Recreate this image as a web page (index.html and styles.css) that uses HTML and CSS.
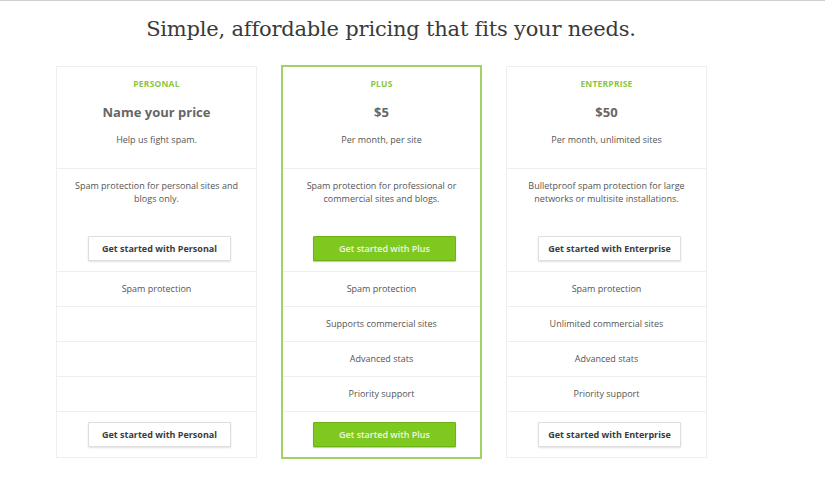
FILE: index.html
```html
<!DOCTYPE html>
<html lang="en">
<head>
<meta charset="utf-8">
<title>Pricing</title>
<link rel="stylesheet" href="styles.css">
</head>
<body>
<div class="topline"></div>
<h1 class="title">Simple, affordable pricing that fits your needs.</h1>
<div class="plans">
  <div class="card">
    <div class="head">
      <div class="label">PERSONAL</div>
      <div class="price">Name your price</div>
      <div class="sub">Help us fight spam.</div>
    </div>
    <div class="desc">
      <p>Spam protection for personal sites and blogs only.</p>
      <a class="btn">Get started with Personal</a>
    </div>
    <ul class="features">
      <li>Spam protection</li>
      <li></li>
      <li></li>
      <li></li>
    </ul>
    <div class="foot"><a class="btn">Get started with Personal</a></div>
  </div>
  <div class="card featured">
    <div class="head">
      <div class="label">PLUS</div>
      <div class="price">$5</div>
      <div class="sub">Per month, per site</div>
    </div>
    <div class="desc">
      <p>Spam protection for professional or commercial sites and blogs.</p>
      <a class="btn btn-green">Get started with Plus</a>
    </div>
    <ul class="features">
      <li>Spam protection</li>
      <li>Supports commercial sites</li>
      <li>Advanced stats</li>
      <li>Priority support</li>
    </ul>
    <div class="foot"><a class="btn btn-green">Get started with Plus</a></div>
  </div>
  <div class="card">
    <div class="head">
      <div class="label">ENTERPRISE</div>
      <div class="price">$50</div>
      <div class="sub">Per month, unlimited sites</div>
    </div>
    <div class="desc">
      <p>Bulletproof spam protection for large networks or multisite installations.</p>
      <a class="btn">Get started with Enterprise</a>
    </div>
    <ul class="features">
      <li>Spam protection</li>
      <li>Unlimited commercial sites</li>
      <li>Advanced stats</li>
      <li>Priority support</li>
    </ul>
    <div class="foot"><a class="btn">Get started with Enterprise</a></div>
  </div>
</div>
</body>
</html>
```

FILE: styles.css
```css
* { box-sizing: border-box; }
html, body { margin: 0; padding: 0; background: #fff; }
body {
  font-family: "Open Sans", "Noto Sans", sans-serif;
  color: #555;
  width: 825px;
  height: 491px;
  overflow: hidden;
}
.topline { height: 1px; background: #cfcfcf; }
.title {
  margin: 13px 0 0;
  padding-right: 43px;
  text-align: center;
  font-family: "DejaVu Serif", "Liberation Serif", serif;
  font-weight: normal;
  font-size: 21px;
  line-height: 30px;
  color: #3a3a3a;
  letter-spacing: -0.2px;
}
.plans {
  display: grid;
  grid-template-columns: 201px 201px 201px;
  column-gap: 24px;
  align-items: center;
  margin: 21px 0 0 56px;
}
.card {
  border: 1px solid #eeeeee;
  text-align: center;
  background: #fff;
}
.card.featured { border: 2px solid #a3d163; }
.head {
  padding: 11px 6px 22px;
  border-bottom: 1px solid #efefef;
}
.label {
  font-size: 8.5px;
  line-height: 12px;
  font-weight: 700;
  color: #8cc63e;
  letter-spacing: 0.2px;
}
.price {
  margin-top: 13px;
  font-size: 13px;
  line-height: 18px;
  font-weight: 700;
  color: #666;
}
.sub {
  margin-top: 12px;
  font-size: 9px;
  line-height: 13px;
  color: #555;
}
.desc {
  padding: 11px 10px 10px 10px;
  border-bottom: 1px solid #efefef;
}
.desc p {
  margin: 0;
  font-size: 9px;
  line-height: 12.5px;
  min-height: 25px;
  color: #555;
}
.desc .btn { margin-top: 31px; }
.btn {
  display: block;
  width: 143px;
  height: 25px;
  margin: 0 auto;
  border: 1px solid #dedede;
  border-radius: 1px;
  background: #fff;
  box-shadow: 0 1px 2px rgba(0,0,0,0.12);
  font-size: 9px;
  font-weight: 700;
  line-height: 23px;
  color: #3b3b3b;
  text-decoration: none;
  transform: translateX(3px);
}
.btn-green {
  background: #7fc820;
  border-color: #6db316;
  color: #eef7e1;
  font-weight: 600;
  box-shadow: 0 1px 1px rgba(60,100,0,0.35);
}
.features {
  list-style: none;
  margin: 0;
  padding: 0;
}
.features li {
  height: 35px;
  line-height: 34px;
  border-bottom: 1px solid #efefef;
  font-size: 9px;
  color: #555;
}
.foot { padding: 10px 0 10px; }
```
